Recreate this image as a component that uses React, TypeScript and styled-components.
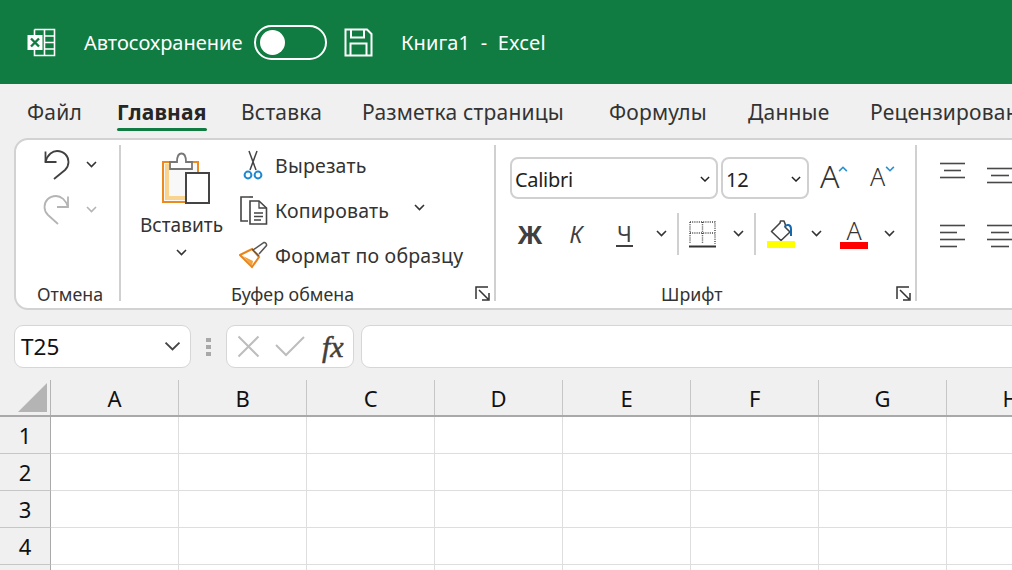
import React from "react";
import styled, { createGlobalStyle } from "styled-components";

const Global = createGlobalStyle`
  html, body { margin: 0; padding: 0; width: 1012px; height: 570px; overflow: hidden; background: #f0f0f0; }
  body { font-family: "Noto Sans", "Open Sans", sans-serif; color: #262626; }
  * { box-sizing: border-box; }
`;

const Page = styled.div`
  width: 1012px;
  height: 570px;
  overflow: hidden;
  display: flex;
  flex-direction: column;
`;

/* ---------- title bar ---------- */
const TitleBar = styled.div`
  height: 84px;
  flex: none;
  background: #107c41;
  color: #fff;
  display: flex;
  align-items: center;
  padding-left: 27px;
  font-size: 20px;
`;
const AutoSave = styled.span`
  margin-left: 28px;
  width: 160px;
  white-space: nowrap;
`;
const Toggle = styled.span`
  margin-left: 10px;
  width: 73px;
  height: 35px;
  border: 2px solid #fff;
  border-radius: 18px;
  background: #107c41;
  display: flex;
  align-items: center;
  padding-left: 4px;
  &::before {
    content: "";
    width: 25px;
    height: 25px;
    border-radius: 50%;
    background: #fff;
  }
`;
const SaveWrap = styled.span`
  margin-left: 17px;
  display: flex;
`;
const DocTitle = styled.span`
  margin-left: 28px;
  white-space: pre;
  letter-spacing: 0.1px;
`;

/* ---------- tabs ---------- */
const Tabs = styled.div`
  height: 54px;
  flex: none;
  display: flex;
  padding-left: 27px;
  white-space: nowrap;
  overflow: hidden;
`;
const Tab = styled.div<{ $w: number; $active?: boolean }>`
  width: ${(p) => p.$w}px;
  flex: none;
  font-size: 21px;
  letter-spacing: 0.2px;
  font-weight: ${(p) => (p.$active ? 700 : 400)};
  color: ${(p) => (p.$active ? "#262626" : "#333")};
  padding-top: 14px;
`;
const TabLabel = styled.span<{ $active?: boolean }>`
  display: inline-block;
  line-height: 28px;
  &::after {
    content: "";
    display: ${(p) => (p.$active ? "block" : "none")};
    height: 3px;
    margin-top: 2px;
    border-radius: 2px;
    background: #107c41;
  }
`;

/* ---------- ribbon ---------- */
const Ribbon = styled.div`
  height: 172px;
  width: 1040px;
  flex: none;
  margin-left: 14px;
  background: #fff;
  border: 2px solid #d2d2d2;
  border-radius: 14px;
  display: flex;
  padding: 5px 0 7px;
`;
const Group = styled.div<{ $w: number }>`
  width: ${(p) => p.$w}px;
  flex: none;
  border-right: 2px solid #d0d0d0;
  display: flex;
  flex-direction: column;
`;
const GroupBody = styled.div`
  flex: 1;
  min-height: 0;
`;
const GroupFoot = styled.div`
  height: 28px;
  flex: none;
  display: grid;
  grid-template-columns: 1fr auto;
  align-items: end;
  font-size: 17.8px;
  color: #333;
  padding-right: 4px;
`;
const FootLabel = styled.span<{ $pad: number }>`
  padding-left: ${(p) => p.$pad}px;
  line-height: 14px;
  white-space: nowrap;
`;
const Launcher = styled.span`
  display: flex;
`;

/* undo group */
const UndoBody = styled(GroupBody)`
  padding: 5px 0 0 27px;
  display: flex;
  flex-direction: column;
  gap: 15px;
`;
const UndoRow = styled.div`
  display: flex;
  align-items: center;
  height: 30px;
  gap: 15px;
`;

/* clipboard group */
const ClipBody = styled(GroupBody)`
  display: flex;
  padding-left: 18px;
`;
const PasteCol = styled.div`
  width: 85px;
  flex: none;
  display: flex;
  flex-direction: column;
  align-items: center;
  padding-top: 7px;
  font-size: 19px;
  letter-spacing: 0.05px;
  color: #333;
`;
const PasteImage = styled.span`
  display: flex;
  margin-left: 8px;
`;
const PasteLabel = styled.span`
  margin-top: 6px;
  line-height: 26px;
  white-space: nowrap;
`;
const PasteChevron = styled.span`
  display: flex;
  margin-top: 11px;
`;
const ClipList = styled.div`
  margin-left: 15px;
  padding-top: 5px;
  display: flex;
  flex-direction: column;
  gap: 15px;
`;
const ClipRow = styled.div`
  height: 30px;
  display: flex;
  align-items: center;
  font-size: 19.5px;
  letter-spacing: 0.2px;
  color: #333;
  white-space: nowrap;
`;
const ClipIcon = styled.span<{ $pl?: number }>`
  width: 36px;
  flex: none;
  display: flex;
  padding-left: ${(p) => p.$pl ?? 0}px;
`;
const ClipChevron = styled.span`
  display: flex;
  margin-left: 25px;
  margin-top: -4px;
`;

/* font group */
const FontBody = styled(GroupBody)`
  padding: 12px 0 0 14px;
`;
const FontTop = styled.div`
  display: flex;
  align-items: center;
  height: 42px;
`;
const Select = styled.div<{ $w: number }>`
  width: ${(p) => p.$w}px;
  height: 42px;
  flex: none;
  margin-right: 3px;
  border: 2px solid #d0d0d0;
  border-radius: 8px;
  display: flex;
  align-items: center;
  justify-content: space-between;
  padding: 2px 6px 0 3px;
  font-size: 20px;
  letter-spacing: -0.3px;
  color: #222;
`;
const GrowFont = styled.span<{ $size: number; $ml: number }>`
  position: relative;
  margin-left: ${(p) => p.$ml}px;
  width: 28px;
  padding-bottom: 4px;
  font-size: ${(p) => p.$size}px;
  font-weight: 300;
  line-height: 30px;
  color: #333;
`;
const Caret = styled.span<{ $right: number }>`
  position: absolute;
  right: ${(p) => p.$right}px;
  top: 5px;
  display: flex;
`;
const FontBottom = styled.div`
  display: flex;
  align-items: center;
  height: 42px;
  margin-top: 14px;
`;
const StyleBtn = styled.span<{ $w: number; $ml?: number }>`
  width: ${(p) => p.$w}px;
  flex: none;
  margin-left: ${(p) => p.$ml ?? 0}px;
  text-align: center;
  font-size: 24px;
  color: #404040;
  line-height: 30px;
`;
const BoldBtn = styled(StyleBtn)`
  font-weight: 700;
  font-size: 25px;
`;
const ItalicBtn = styled(StyleBtn)`
  font-style: italic;
  font-size: 23px;
`;
const UnderBtn = styled(StyleBtn)`
  font-size: 22px;
  line-height: 24px;
  border-bottom: 2px solid #404040;
`;
const VSep = styled.span<{ $ml: number }>`
  width: 2px;
  height: 42px;
  flex: none;
  background: #d0d0d0;
  margin-left: ${(p) => p.$ml}px;
`;
const Slot = styled.span<{ $ml: number }>`
  display: flex;
  flex: none;
  margin-left: ${(p) => p.$ml}px;
`;
const ColorA = styled.span`
  width: 28px;
  flex: none;
  margin-left: 18px;
  display: flex;
  flex-direction: column;
  align-items: center;
  font-size: 25px;
  font-weight: 300;
  line-height: 22px;
  color: #333;
  &::after {
    content: "";
    width: 28px;
    height: 7px;
    margin-top: 1px;
    background: #f00;
  }
`;

/* alignment group */
const AlignBody = styled.div`
  padding: 17px 0 0 23px;
  display: grid;
  grid-template-columns: 26px 26px;
  column-gap: 21px;
  row-gap: 34px;
  align-content: start;
`;
const AlignCell = styled.span<{ $dy?: number }>`
  display: flex;
  padding-top: ${(p) => p.$dy ?? 0}px;
`;

/* ---------- formula bar ---------- */
const FormulaBar = styled.div`
  margin: 15px 0 0 14px;
  height: 43px;
  flex: none;
  display: flex;
  align-items: stretch;
  width: 1040px;
`;
const NameBox = styled.div`
  width: 177px;
  flex: none;
  background: #fff;
  border: 1px solid #d6d6d6;
  border-radius: 9px;
  display: flex;
  align-items: center;
  justify-content: space-between;
  padding: 0 9px 0 6px;
  font-size: 22.5px;
  color: #111;
`;
const Grip = styled.span`
  width: 35px;
  flex: none;
  display: flex;
  flex-direction: column;
  align-items: center;
  justify-content: center;
  gap: 3px;
  & > i {
    width: 5px;
    height: 4px;
    background: #a8a8a8;
  }
`;
const FxBox = styled.div`
  width: 128px;
  flex: none;
  background: #fff;
  border: 1px solid #d6d6d6;
  border-radius: 9px;
  display: flex;
  align-items: center;
  padding-left: 10px;
`;
const FxLabel = styled.span`
  margin-left: 17px;
  font-family: "Liberation Serif", serif;
  font-style: italic;
  font-size: 30px;
  -webkit-text-stroke: 0.5px #404040;
  color: #404040;
  line-height: 30px;
`;
const FormulaInput = styled.div`
  flex: 1;
  margin-left: 7px;
  background: #fff;
  border: 1px solid #d6d6d6;
  border-radius: 9px;
`;

/* ---------- sheet ---------- */
const Sheet = styled.div`
  margin-top: 12px;
  flex: 1;
  min-height: 0;
  background: #fff;
  overflow: hidden;
`;
const HeadRow = styled.div`
  height: 37px;
  display: flex;
  background: #f0f0f0;
  border-bottom: 2px solid #a9a9a9;
`;
const Corner = styled.div`
  width: 51px;
  flex: none;
  border-right: 1px solid #b4b4b4;
  display: flex;
  align-items: flex-end;
  justify-content: flex-end;
  padding: 0 3px 3px 0;
`;
const ColHead = styled.div`
  width: 128px;
  flex: none;
  border-right: 1px solid #c6c6c6;
  text-align: center;
  font-size: 22px;
  line-height: 37px;
  letter-spacing: -0.2px;
  color: #111;
`;
const Row = styled.div`
  height: 37px;
  display: flex;
`;
const RowHead = styled.div`
  width: 51px;
  flex: none;
  background: #f0f0f0;
  border-right: 1px solid #a9a9a9;
  border-bottom: 1px solid #c6c6c6;
  text-align: center;
  font-size: 22px;
  line-height: 36px;
  color: #111;
`;
const Cell = styled.div`
  width: 128px;
  flex: none;
  border-right: 1px solid #dedede;
  border-bottom: 1px solid #dedede;
`;

/* ---------- icons ---------- */
function Chevron({ color = "#333", w = 11, sw = 1.6 }: { color?: string; w?: number; sw?: number }) {
  return (
    <svg width={w} height={w * 0.64} viewBox="0 0 11 7">
      <path d="M1 1l4.5 4.5L10 1" fill="none" stroke={color} strokeWidth={sw} />
    </svg>
  );
}

function ExcelLogo() {
  return (
    <svg width="29" height="29" viewBox="0 0 29 29">
      <path d="M7.5 1.5H27.5V27.5H7.5V22" fill="none" stroke="#fff" strokeWidth="1.6" />
      <path d="M17.5 1.5V27.5M17.5 8H27.5M17.5 14.5H27.5M17.5 21H27.5M7.5 1.5V7" fill="none" stroke="#fff" strokeWidth="1.6" />
      <rect x="0.5" y="7" width="15" height="15" fill="#fff" />
      <path d="M4 10.5l8 8M12 10.5l-8 8" stroke="#107c41" strokeWidth="2.4" />
    </svg>
  );
}

function SaveIcon() {
  return (
    <svg width="29" height="29" viewBox="0 0 29 29" fill="none" stroke="#fff" strokeWidth="2">
      <path d="M1.5 1.5H23L27.5 6V27.5H1.5Z" />
      <path d="M7 1.5V9.5H20V1.5M6.5 27.5V15.5H22.5V27.5" />
    </svg>
  );
}

function UndoIcon() {
  return (
    <svg width="28" height="30" viewBox="0 0 28 30" fill="none" stroke="#404040" strokeWidth="1.8">
      <path d="M2.5 1.5V12H13.5" />
      <path d="M2.5 12C4.5 4 10 1 14 1C21 1 25.5 6 25.5 12C25.5 15 24 18 22 20L11 29" />
    </svg>
  );
}

function RedoIcon() {
  return (
    <svg width="28" height="30" viewBox="0 0 28 30" fill="none" stroke="#b4b4b4" strokeWidth="1.8">
      <path d="M25 1.5V12H14" />
      <path d="M25 12C23 5 18 1 13 1C6 1 1.5 6 1.5 12C1.5 15 3 18 5 20L15 29" />
    </svg>
  );
}

function PasteIcon() {
  return (
    <svg width="50" height="54" viewBox="0 0 50 54">
      <rect x="2" y="10" width="35" height="40" fill="#f8f8f8" stroke="#ec8a1d" strokeWidth="2" />
      <path d="M8 12V44H32V48H4V12Z" fill="#f9d48f" />
      <path d="M9 17V10H16C16 4 18 1.5 20.5 1.5C23 1.5 25 4 25 10H31V17Z" fill="#fff" stroke="#777" strokeWidth="1.8" />
      <rect x="25" y="21" width="23" height="30" fill="#fff" stroke="#444" strokeWidth="2" />
    </svg>
  );
}

function ScissorsIcon() {
  return (
    <svg width="20" height="31" viewBox="0 0 20 31" fill="none">
      <path d="M6 1L13 20M14 1L7 20" stroke="#444" strokeWidth="1.5" />
      <circle cx="5" cy="25" r="3.4" stroke="#1e88d0" strokeWidth="2" />
      <circle cx="15" cy="25" r="3.4" stroke="#1e88d0" strokeWidth="2" />
    </svg>
  );
}

function CopyIcon() {
  return (
    <svg width="29" height="29" viewBox="0 0 29 29" fill="none" stroke="#444" strokeWidth="1.6">
      <path d="M10 1H2V25H9" />
      <path d="M10 1H14" />
      <path d="M11 5H20L27.5 12V28H11Z" fill="#fff" />
      <path d="M20 5V12H27.5M15 17H24M15 20.5H24M15 24H22" strokeWidth="1.3" />
    </svg>
  );
}

function BrushIcon() {
  return (
    <svg width="29" height="28" viewBox="0 0 29 28" fill="none">
      <path d="M1 14L13 8L20 16L13 26Z" fill="#fff" stroke="#e9841a" strokeWidth="2" />
      <path d="M4 15L14 20L13 25Z" fill="#f2a33c" />
      <path d="M14 9L25 1.5C26 1 28 3 27.5 4.5L20 13" fill="#fff" stroke="#555" strokeWidth="1.5" />
      <path d="M13 8L20 15" stroke="#555" strokeWidth="1.5" />
    </svg>
  );
}

function LauncherIcon() {
  return (
    <svg width="15" height="15" viewBox="0 0 15 15" fill="none" stroke="#333" strokeWidth="1.5">
      <path d="M13 1H1V13" />
      <path d="M4 4L13 13M14 7V14H7" />
    </svg>
  );
}

function BordersIcon() {
  return (
    <svg width="27" height="27" viewBox="0 0 27 27" fill="none">
      <path d="M1 1H26V23M1 1V23M13.5 1V23M1 12H26" stroke="#444" strokeWidth="1.4" strokeDasharray="1 1.2" />
      <path d="M0 25.5H27" stroke="#333" strokeWidth="2" />
    </svg>
  );
}

function FillIcon() {
  return (
    <svg width="28" height="29" viewBox="0 0 28 29">
      <path d="M4.5 11.5L13 3L13.5 1H17L18.5 5L18 7L23 12L14 20.5Z" fill="#fff" stroke="#444" strokeWidth="1.6" strokeLinejoin="round" />
      <path d="M18 7C19 4 24 4 24 9V16" fill="none" stroke="#1468b0" strokeWidth="2" />
      <rect x="0" y="21" width="28" height="7" fill="#ffff00" />
    </svg>
  );
}

function Caretline({ dir }: { dir: "up" | "down" }) {
  return (
    <svg width="10" height="6" viewBox="0 0 11 7" fill="none">
      <path d={dir === "up" ? "M1 6L5.5 1.5L10 6" : "M1 1L5.5 5.5L10 1"} stroke="#2b8fd1" strokeWidth="1.9" />
    </svg>
  );
}

function AlignIcon({ lines }: { lines: [number, number][] }) {
  return (
    <svg width="26" height={lines.length * 7 + 2} viewBox={`0 0 26 ${lines.length * 7 + 2}`} stroke="#484848" strokeWidth="1.6">
      {lines.map(([a, b], i) => (
        <path key={i} d={`M${a} ${i * 7 + 1.5}H${b}`} />
      ))}
    </svg>
  );
}

function CrossIcon() {
  return (
    <svg width="23" height="23" viewBox="0 0 23 23" stroke="#bdbdbd" strokeWidth="2">
      <path d="M1.5 1.5l20 20M21.5 1.5l-20 20" />
    </svg>
  );
}

function CheckIcon() {
  return (
    <svg width="30" height="21" viewBox="0 0 30 21" fill="none" stroke="#bdbdbd" strokeWidth="2">
      <path d="M1 9l10 10L29 1" />
    </svg>
  );
}

function CornerTriangle() {
  return (
    <svg width="29" height="29" viewBox="0 0 29 29">
      <path d="M29 0V29H0Z" fill="#b4b4b4" />
    </svg>
  );
}

const tabs: [string, number][] = [
  ["Файл", 90],
  ["Главная", 124],
  ["Вставка", 121],
  ["Разметка страницы", 247],
  ["Формулы", 139],
  ["Данные", 122],
  ["Рецензирование", 200],
];
const columns = ["A", "B", "C", "D", "E", "F", "G", "H"];
const rows = ["1", "2", "3", "4", ""];

export default function App() {
  return (
    <Page>
      <Global />
      <TitleBar>
        <ExcelLogo />
        <AutoSave>Автосохранение</AutoSave>
        <Toggle />
        <SaveWrap>
          <SaveIcon />
        </SaveWrap>
        <DocTitle>Книга1  -  Excel</DocTitle>
      </TitleBar>

      <Tabs>
        {tabs.map(([t, w]) => (
          <Tab key={t} $w={w} $active={t === "Главная"}>
            <TabLabel $active={t === "Главная"}>{t}</TabLabel>
          </Tab>
        ))}
      </Tabs>

      <Ribbon>
        <Group $w={105}>
          <UndoBody>
            <UndoRow>
              <UndoIcon />
              <Chevron />
            </UndoRow>
            <UndoRow>
              <RedoIcon />
              <Chevron color="#b4b4b4" />
            </UndoRow>
          </UndoBody>
          <GroupFoot>
            <FootLabel $pad={21}>Отмена</FootLabel>
          </GroupFoot>
        </Group>

        <Group $w={375}>
          <ClipBody>
            <PasteCol>
              <PasteImage>
                <PasteIcon />
              </PasteImage>
              <PasteLabel>Вставить</PasteLabel>
              <PasteChevron>
                <Chevron />
              </PasteChevron>
            </PasteCol>
            <ClipList>
              <ClipRow>
                <ClipIcon $pl={4}>
                  <ScissorsIcon />
                </ClipIcon>
                Вырезать
              </ClipRow>
              <ClipRow>
                <ClipIcon>
                  <CopyIcon />
                </ClipIcon>
                Копировать
                <ClipChevron>
                  <Chevron />
                </ClipChevron>
              </ClipRow>
              <ClipRow>
                <ClipIcon>
                  <BrushIcon />
                </ClipIcon>
                Формат по образцу
              </ClipRow>
            </ClipList>
          </ClipBody>
          <GroupFoot>
            <FootLabel $pad={110}>Буфер обмена</FootLabel>
            <Launcher>
              <LauncherIcon />
            </Launcher>
          </GroupFoot>
        </Group>

        <Group $w={421}>
          <FontBody>
            <FontTop>
              <Select $w={208}>
                Calibri
                <Chevron color="#222" w={10} />
              </Select>
              <Select $w={88}>
                12
                <Chevron color="#222" w={10} />
              </Select>
              <GrowFont $size={32} $ml={8}>
                A
                <Caret $right={0}>
                  <Caretline dir="up" />
                </Caret>
              </GrowFont>
              <GrowFont $size={25} $ml={22}>
                A
                <Caret $right={3}>
                  <Caretline dir="down" />
                </Caret>
              </GrowFont>
            </FontTop>
            <FontBottom>
              <BoldBtn $w={34} $ml={3}>Ж</BoldBtn>
              <ItalicBtn $w={20} $ml={19}>К</ItalicBtn>
              <UnderBtn $w={17} $ml={30}>Ч</UnderBtn>
              <Slot $ml={23}>
                <Chevron />
              </Slot>
              <VSep $ml={10} />
              <Slot $ml={10}>
                <BordersIcon />
              </Slot>
              <Slot $ml={17}>
                <Chevron />
              </Slot>
              <VSep $ml={10} />
              <Slot $ml={11}>
                <FillIcon />
              </Slot>
              <Slot $ml={16}>
                <Chevron />
              </Slot>
              <ColorA>A</ColorA>
              <Slot $ml={16}>
                <Chevron />
              </Slot>
            </FontBottom>
          </FontBody>
          <GroupFoot>
            <FootLabel $pad={165}>Шрифт</FootLabel>
            <Launcher>
              <LauncherIcon />
            </Launcher>
          </GroupFoot>
        </Group>

        <AlignBody>
          <AlignCell>
            <AlignIcon lines={[[0, 25], [4, 21], [0, 25]]} />
          </AlignCell>
          <AlignCell $dy={5}>
            <AlignIcon lines={[[0, 26], [4, 22], [0, 26]]} />
          </AlignCell>
          <AlignCell>
            <AlignIcon lines={[[0, 25], [0, 17], [0, 25], [0, 17]]} />
          </AlignCell>
          <AlignCell>
            <AlignIcon lines={[[0, 26], [4, 22], [0, 26], [4, 22]]} />
          </AlignCell>
        </AlignBody>
      </Ribbon>

      <FormulaBar>
        <NameBox>
          T25
          <Chevron color="#444" w={17} sw={1.2} />
        </NameBox>
        <Grip>
          <i />
          <i />
          <i />
        </Grip>
        <FxBox>
          <CrossIcon />
          <Slot $ml={15}>
            <CheckIcon />
          </Slot>
          <FxLabel>fx</FxLabel>
        </FxBox>
        <FormulaInput />
      </FormulaBar>

      <Sheet>
        <HeadRow>
          <Corner>
            <CornerTriangle />
          </Corner>
          {columns.map((c) => (
            <ColHead key={c}>{c}</ColHead>
          ))}
        </HeadRow>
        {rows.map((r, i) => (
          <Row key={i}>
            <RowHead>{r}</RowHead>
            {columns.map((c) => (
              <Cell key={c} />
            ))}
          </Row>
        ))}
      </Sheet>
    </Page>
  );
}
